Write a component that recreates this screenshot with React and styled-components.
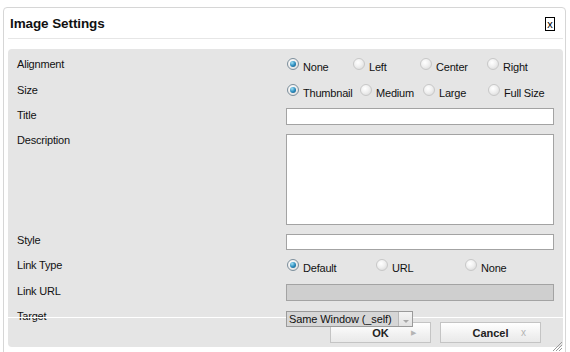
import styled, { createGlobalStyle } from "styled-components";

const Global = createGlobalStyle`
  html, body {
    margin: 0;
    padding: 0;
    background: #fff;
    font-family: "Liberation Sans", Arial, sans-serif;
    overflow: hidden;
  }
`;

const Dialog = styled.div`
  position: relative;
  box-sizing: border-box;
  margin: 7px 4px 0 3px;
  height: 352px;
  border: 1px solid #d6d6d6;
  border-radius: 4px;
  background: #fff;
  padding: 0 2px 0 4px;
`;

const Header = styled.div`
  display: flex;
  align-items: center;
  justify-content: space-between;
  height: 30px;
  padding: 0 8px 0 2px;
  border-bottom: 1px solid #e6e6e6;
  margin-bottom: 10px;
`;

const Title = styled.h1`
  margin: 0;
  font-size: 13.5px;
  font-weight: bold;
  color: #111;
  padding-top: 1px;
  letter-spacing: -0.1px;
`;

const Close = styled.button`
  box-sizing: border-box;
  width: 10px;
  height: 14px;
  padding: 0;
  border: 1px solid #000;
  background: #fff;
  font: 11px "Liberation Sans", Arial, sans-serif;
  line-height: 11px;
  color: #000;
  margin-top: 2px;
`;

const Panel = styled.div`
  box-sizing: border-box;
  height: 298px;
  background: #e5e5e5;
  border-radius: 4px;
  padding: 6px 9px 15px 9px;
  font-size: 11px;
  letter-spacing: -0.2px;
`;

const Row = styled.div`
  display: grid;
  grid-template-columns: 269px 268px;
  height: ${(p) => p.$h || 25}px;
`;

const Label = styled.div`
  line-height: 14px;
  color: #111;
  padding-top: 2px;
`;

const Options = styled.div`
  display: grid;
  grid-template-columns: ${(p) => p.$cols};
  padding-left: 1px;
`;

const Option = styled.label`
  display: flex;
  align-items: flex-start;
  line-height: 14px;
  color: #111;
  white-space: nowrap;
`;

const Radio = styled.span`
  box-sizing: border-box;
  width: 12px;
  height: 12px;
  margin: 3px 4px 0 0;
  border-radius: 50%;
  border: 1px solid ${(p) => (p.$on ? "#7d8f9c" : "#c8c8c8")};
  background: radial-gradient(circle at 40% 35%, #ffffff 0%, #f0f0f0 45%, #d4d4d4 100%);
  display: flex;
  align-items: center;
  justify-content: center;
  flex: none;

  &::after {
    content: "";
    display: ${(p) => (p.$on ? "block" : "none")};
    width: 6px;
    height: 6px;
    border-radius: 50%;
    background: radial-gradient(circle at 35% 30%, #9fe0f5 0%, #2f8fc0 50%, #0d4f78 100%);
  }
`;

const OptionText = styled.span`
  margin-top: 5px;
`;

const TextInput = styled.input`
  box-sizing: border-box;
  width: 268px;
  height: ${(p) => p.$h || 17}px;
  margin-top: ${(p) => p.$top || 2}px;
  border: 1px solid #a3a3a3;
  background: ${(p) => (p.disabled ? "#cfcfcf" : "#fff")};
  padding: 0 2px;
  font: 11px "Liberation Sans", Arial, sans-serif;
  outline: none;
`;

const TextArea = styled.textarea`
  box-sizing: border-box;
  width: 268px;
  height: 91px;
  margin-top: 3px;
  border: 1px solid #a3a3a3;
  background: #fff;
  resize: none;
  outline: none;
  font: 11px "Liberation Sans", Arial, sans-serif;
`;

const Select = styled.div`
  position: relative;
  z-index: 1;
  box-sizing: border-box;
  display: flex;
  align-items: center;
  width: 127px;
  height: 16px;
  margin-top: 4px;
  border: 1px solid #9a9a9a;
  background: #d6d6d6;
  line-height: 14px;
  color: #111;
  overflow: hidden;
  letter-spacing: -0.1px;
`;

const SelectText = styled.span`
  flex: 1;
  padding-left: 2px;
  white-space: nowrap;
`;

const SelectArrow = styled.span`
  box-sizing: border-box;
  width: 14px;
  height: 14px;
  border-left: 1px solid #b8b8b8;
  background: linear-gradient(#f4f4f4, #e2e2e2);
  display: flex;
  align-items: flex-end;
  justify-content: center;
  padding-bottom: 3px;

  &::after {
    content: "";
    border-left: 3px solid transparent;
    border-right: 3px solid transparent;
    border-top: 3px solid #a8a8a8;
  }
`;

const Footer = styled.div`
  position: absolute;
  left: 4px;
  right: 2px;
  top: 309px;
  border-top: 1px solid #fff;
  display: flex;
  justify-content: flex-end;
  gap: 9px;
  padding: 4px 22px 0 0;
`;

const Button = styled.button`
  box-sizing: border-box;
  position: relative;
  width: 101px;
  height: 21px;
  border: 1px solid #c4c4c4;
  background: linear-gradient(#ffffff, #f1f1f1 60%, #e9e9e9);
  font: bold 11px "Liberation Sans", Arial, sans-serif;
  color: #222;
  padding: 0;
`;

const ButtonMark = styled.span`
  position: absolute;
  right: ${(p) => p.$right}px;
  top: ${(p) => p.$top || 4}px;
  font-weight: normal;
  font-size: ${(p) => p.$size || 9}px;
  color: #b4b4b4;
`;

const Grip = styled.svg`
  position: absolute;
  right: 2px;
  bottom: 6px;
`;

export default function App() {
  return (
    <>
      <Global />
      <Dialog>
        <Header>
          <Title>Image Settings</Title>
          <Close>x</Close>
        </Header>
        <Panel>
          <Row $h={26}>
            <Label>Alignment</Label>
            <Options $cols="66px 67px 67px 1fr">
              <Option><Radio $on /><OptionText>None</OptionText></Option>
              <Option><Radio /><OptionText>Left</OptionText></Option>
              <Option><Radio /><OptionText>Center</OptionText></Option>
              <Option><Radio /><OptionText>Right</OptionText></Option>
            </Options>
          </Row>
          <Row>
            <Label>Size</Label>
            <Options $cols="73px 63px 65px 1fr">
              <Option><Radio $on /><OptionText>Thumbnail</OptionText></Option>
              <Option><Radio /><OptionText>Medium</OptionText></Option>
              <Option><Radio /><OptionText>Large</OptionText></Option>
              <Option><Radio /><OptionText>Full Size</OptionText></Option>
            </Options>
          </Row>
          <Row>
            <Label>Title</Label>
            <div><TextInput /></div>
          </Row>
          <Row $h={100}>
            <Label>Description</Label>
            <div><TextArea /></div>
          </Row>
          <Row>
            <Label>Style</Label>
            <div><TextInput $h={16} $top={3} /></div>
          </Row>
          <Row $h={26}>
            <Label>Link Type</Label>
            <Options $cols="repeat(3, 1fr)">
              <Option><Radio $on /><OptionText>Default</OptionText></Option>
              <Option><Radio /><OptionText>URL</OptionText></Option>
              <Option><Radio /><OptionText>None</OptionText></Option>
            </Options>
          </Row>
          <Row>
            <Label>Link URL</Label>
            <div><TextInput disabled /></div>
          </Row>
          <Row>
            <Label>Target</Label>
            <div>
              <Select>
                <SelectText>Same Window (_self)</SelectText>
                <SelectArrow />
              </Select>
            </div>
          </Row>
        </Panel>
        <Footer>
          <Button>
            OK
            <ButtonMark $right={14} $size={7} $top={6}>▶</ButtonMark>
          </Button>
          <Button>
            Cancel
            <ButtonMark $right={14} $size={10}>x</ButtonMark>
          </Button>
        </Footer>
        <Grip width="12" height="12" viewBox="0 0 12 12">
          <path d="M11 2 L2 11 M11 5 L5 11 M11 8 L8 11" stroke="#9a9a9a" strokeWidth="1" fill="none" />
        </Grip>
      </Dialog>
    </>
  );
}
